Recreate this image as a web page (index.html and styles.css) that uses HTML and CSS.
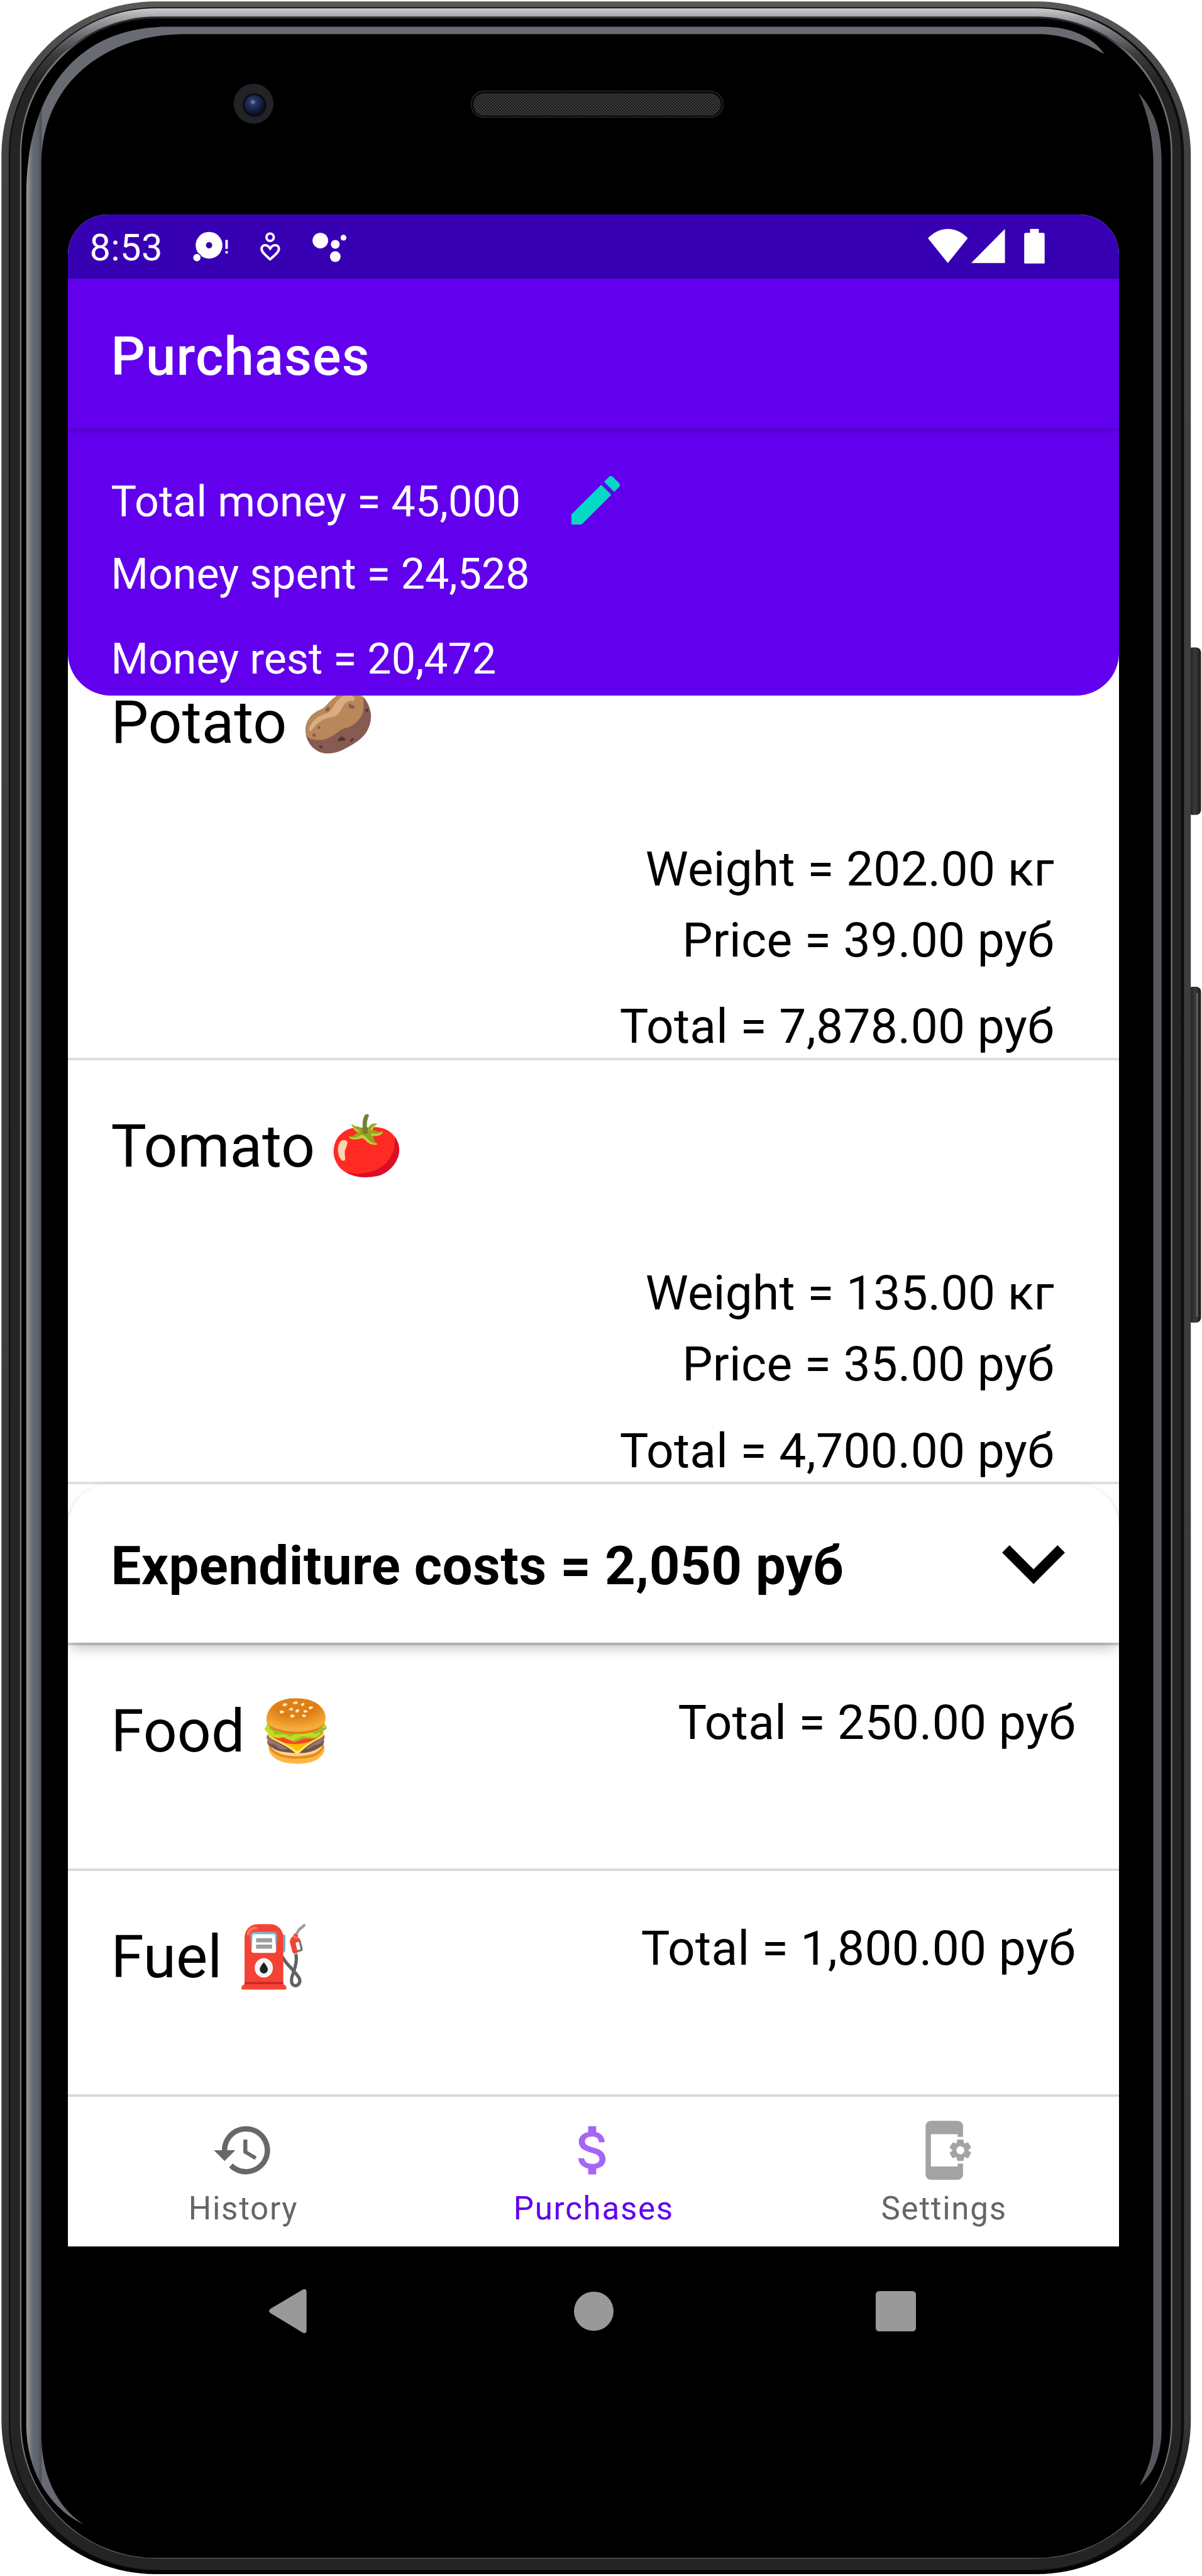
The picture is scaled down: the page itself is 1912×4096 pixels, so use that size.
FILE: index.html
```html
<!DOCTYPE html>
<html lang="en">
<head>
<meta charset="utf-8">
<title>Purchases</title>
<link rel="stylesheet" href="styles.css">
</head>
<body>
<main class="device">
  <svg class="frame" viewBox="0 0 2470 5292" preserveAspectRatio="none" aria-hidden="true">
    <defs>
      <linearGradient id="rim" gradientUnits="userSpaceOnUse" x1="0" y1="0" x2="0" y2="5292">
        <stop offset="0" stop-color="#5b5a59"/><stop offset=".02" stop-color="#4e4c4b"/><stop offset=".06" stop-color="#434040"/><stop offset=".94" stop-color="#3a3736"/><stop offset=".985" stop-color="#0b0b0b"/><stop offset="1" stop-color="#000"/>
      </linearGradient>
      <linearGradient id="bevel" gradientUnits="userSpaceOnUse" x1="0" y1="17" x2="0" y2="217">
        <stop offset="0" stop-color="#cbccce"/><stop offset=".09" stop-color="#a4a6aa"/><stop offset=".24" stop-color="#76797d"/><stop offset=".48" stop-color="#3a3b3d"/><stop offset=".75" stop-color="#242424"/><stop offset="1" stop-color="#242424"/>
      </linearGradient>
      <linearGradient id="edge" gradientUnits="userSpaceOnUse" x1="0" y1="34" x2="0" y2="234">
        <stop offset="0" stop-color="#2a2a2a"/><stop offset=".2" stop-color="#2a2a2a"/><stop offset=".4" stop-color="#777"/><stop offset="1" stop-color="#727373"/>
      </linearGradient>
      <linearGradient id="glassL" gradientUnits="userSpaceOnUse" x1="54" y1="0" x2="86" y2="0">
        <stop offset="0" stop-color="#9a9a9b"/><stop offset=".15" stop-color="#88898c"/><stop offset=".4" stop-color="#676b73"/><stop offset=".75" stop-color="#5d636b"/><stop offset=".98" stop-color="#484d54"/><stop offset="1" stop-color="#696b72"/>
      </linearGradient>
      <linearGradient id="key" x1="0" y1="0" x2="1" y2="0">
        <stop offset="0" stop-color="#111"/><stop offset=".55" stop-color="#3a3a3a"/><stop offset="1" stop-color="#1c1c1c"/>
      </linearGradient>
      <radialGradient id="lens" cx=".42" cy=".35" r=".65">
        <stop offset="0" stop-color="#8d96b4"/><stop offset=".22" stop-color="#2a3764"/><stop offset=".65" stop-color="#131f45"/><stop offset="1" stop-color="#0a0e1c"/>
      </radialGradient>
      <pattern id="mesh" width="6" height="6" patternUnits="userSpaceOnUse">
        <rect width="6" height="6" fill="#141414"/><circle cx="1.5" cy="1.5" r="1.5" fill="#4e5050"/><circle cx="4.5" cy="4.5" r="1.5" fill="#4e5050"/>
      </pattern>
    </defs>
    <rect x="2440" y="1330" width="28" height="344" rx="10" fill="url(#key)"/>
    <rect x="2440" y="2027" width="28" height="690" rx="10" fill="url(#key)"/>
    <path d="M2460 2040V2705" stroke="#6a6a6a" stroke-width="3"/>
    <rect x="3" y="3" width="2444" height="5285" rx="316" fill="url(#rim)"/>
    <rect x="18" y="15" width="2415" height="5266" rx="303" fill="#0d0d0d"/>
    <rect x="21" y="17" width="2406" height="5262" rx="300" fill="url(#bevel)"/>
    <rect x="41" y="34" width="2368" height="5222" rx="280" fill="url(#edge)"/>
    <rect x="44" y="38" width="2362" height="5217" rx="277" fill="#000"/>
    <path fill="url(#glassL)" d="M2141 55H345C150 55 54 200 54 400V4980C54 5080 105 5155 172 5186C115 5150 85 5080 85 5003V340C85 160 230 70 378 70H2141C2185 72 2225 85 2269 111C2245 75 2200 55 2141 55Z"/>
    <path fill="#57585d" d="M2339 190C2375 230 2387 275 2387 335V4990C2387 5045 2368 5085 2342 5106C2360 5070 2370 5045 2370 5000V340C2370 290 2362 240 2339 190Z"/>
    <circle cx="521" cy="213" r="41" fill="#222326"/>
    <circle cx="523" cy="216" r="24" fill="#08090d"/>
    <circle cx="523" cy="216" r="21" fill="url(#lens)"/>
    <rect x="968" y="187" width="518" height="54" rx="27" fill="#0a0a0a" stroke="#262728" stroke-width="2"/>
    <rect x="973" y="192" width="508" height="45" rx="22" fill="url(#mesh)"/>
  </svg>

  <div class="screen">
    <div class="status">
      <span class="clock">8:53</span>
      <svg class="notices" viewBox="396 470 320 72" fill="#fff">
        <path fill-rule="evenodd" d="M429 476a27.5 27.5 0 1 1 0 55a27.5 27.5 0 1 1 0-55zM429 497a6.5 6.5 0 1 0 0 13a6.5 6.5 0 1 0 0-13z"/>
        <circle cx="404" cy="529" r="9.5" fill="#3700b3"/><circle cx="404" cy="529" r="7.5"/>
        <path d="M462.5 492.500h5v18.500h-5zM462.500 515.500h5v5h-5z"/>
        <circle cx="554.500" cy="487" r="7.500" fill="none" stroke="#fff" stroke-width="5"/>
        <path fill="none" stroke="#fff" stroke-width="5" stroke-linejoin="round" d="M554.500 511C550 501 537 501 537 511C537 518 545 524 554.500 532.500C564 524 572.500 518 572.500 511C572.500 501 559 501 554.500 511Z"/>
        <circle cx="657.700" cy="494" r="16"/><circle cx="688.400" cy="501.700" r="9"/><circle cx="705.300" cy="488" r="6"/><circle cx="688.400" cy="527" r="11"/>
      </svg>
      <svg class="signals" viewBox="1906 470 241 72" fill="#fff">
        <path d="M1906 489Q1925 470 1947 470T1988 489L1947 540ZM2064.400 470V540H1995ZM2116 470h18v8h9q3 0 3 3v58q0 3-3 3h-36q-3 0-3-3v-58q0-3 3-3h9z"/>
      </svg>
    </div>

    <header class="appbar"><h1>Purchases</h1></header>

    <section class="summary">
      <div class="summary-total">
        <p>Total money = 45,000</p>
        <svg class="edit" viewBox="3 3 18 18"><path d="M3 17.250V21h3.750L17.810 9.940l-3.750-3.750L3 17.250zM20.710 7.040c.39-.39.39-1.020 0-1.410l-2.340-2.340c-.39-.39-1.020-.39-1.410 0l-1.830 1.830 3.750 3.750 1.830-1.830z"/></svg>
      </div>
      <p class="spent">Money spent = 24,528</p>
      <p class="rest">Money rest = 20,472</p>
    </section>

    <ul class="products">
      <li class="product">
        <h2>Potato 🥔</h2>
        <p class="weight">Weight = 202.00 кг</p>
        <p class="price">Price = 39.00 руб</p>
        <p class="sum">Total = 7,878.00 руб</p>
      </li>
      <li class="product">
        <h2>Tomato 🍅</h2>
        <p class="weight">Weight = 135.00 кг</p>
        <p class="price">Price = 35.00 руб</p>
        <p class="sum">Total = 4,700.00 руб</p>
      </li>
    </ul>

    <section class="expand">
      <h2>Expenditure costs = 2,050 руб</h2>
      <svg class="chevron" viewBox="6 8.590 12 7.410"><path d="M16.590 8.590 12 13.170 7.410 8.590 6 10l6 6 6-6z"/></svg>
    </section>

    <ul class="costs">
      <li class="cost"><h2>Food 🍔</h2><p>Total = 250.00 руб</p></li>
      <li class="cost"><h2>Fuel ⛽</h2><p>Total = 1,800.00 руб</p></li>
    </ul>

    <nav class="tabs">
      <a class="tab">
        <svg viewBox="0 0 24 24" fill="#686868"><path d="M13 3c-4.970 0-9 4.030-9 9H1l3.890 3.890.07.14L9 12H6c0-3.870 3.130-7 7-7s7 3.130 7 7-3.130 7-7 7c-1.930 0-3.680-.79-4.940-2.060l-1.420 1.420C8.270 19.990 10.510 21 13 21c4.970 0 9-4.030 9-9s-4.030-9-9-9zm-1 5v5l4.280 2.540.72-1.210-3.500-2.080V8H12z"/></svg>
        <span>History</span>
      </a>
      <a class="tab active">
        <svg viewBox="0 0 24 24" fill="#a566f6"><path d="M11.800 10.900c-2.270-.59-3-1.200-3-2.150 0-1.090 1.010-1.850 2.700-1.850 1.780 0 2.440.85 2.500 2.100h2.210c-.07-1.720-1.120-3.300-3.210-3.810V3h-3v2.160c-1.940.42-3.500 1.680-3.500 3.610 0 2.310 1.910 3.460 4.700 4.130 2.500.6 3 1.480 3 2.410 0 .69-.49 1.790-2.700 1.790-2.060 0-2.870-.92-2.980-2.100h-2.200c.12 2.190 1.760 3.420 3.680 3.830V21h3v-2.150c1.950-.37 3.500-1.500 3.500-3.550 0-2.840-2.430-3.810-4.700-4.400z"/></svg>
        <span>Purchases</span>
      </a>
      <a class="tab">
        <svg viewBox="0 0 24 24" fill="#a3a3a3"><path d="M21.810 12.740l-.82-.63v-.22l.8-.63c.16-.12.2-.34.1-.51l-.85-1.480c-.07-.13-.21-.2-.35-.2-.05 0-.1.010-.15.030l-.95.38c-.08-.05-.11-.07-.19-.11l-.15-1.010c-.03-.21-.2-.36-.4-.36h-1.710c-.2 0-.37.15-.4.34l-.14 1.010c-.03.020-.07.030-.1.050l-.09.060-.95-.38c-.05-.02-.1-.03-.15-.03-.14 0-.27.070-.35.2l-.85 1.480c-.1.170-.06.390.1.510l.8.630v.23l-.8.630c-.16.120-.2.340-.1.510l.85 1.480c.07.130.21.200.35.200.05 0 .1-.01.15-.03l.95-.37c.08.050.12.070.2.110l.15 1.010c.03.200.2.340.4.340h1.710c.2 0 .37-.15.4-.34l.15-1.010c.03-.02.07-.03.1-.05l.09-.06.95.38c.05.020.1.030.15.030.14 0 .27-.07.35-.2l.85-1.480c.1-.17.06-.39-.1-.51zM18 13.500c-.83 0-1.500-.67-1.500-1.500s.67-1.500 1.500-1.500 1.500.67 1.500 1.500-.67 1.500-1.500 1.500zM17 18H7V6h10v1h2V3c0-1.100-.9-2-2-2H7c-1.100 0-2 .9-2 2v18c0 1.100.9 2 2 2h10c1.100 0 2-.9 2-2v-4h-2v1z"/></svg>
        <span>Settings</span>
      </a>
    </nav>

    <div class="system">
      <svg class="back" viewBox="553 4704 77 90"><path fill="#999" d="M622 4705Q630 4701 630 4710V4788Q630 4797 622 4793L556 4753Q550 4749 556 4744Z"/></svg>
      <span class="home"></span>
      <span class="recent"></span>
    </div>
  </div>
</main>
</body>
</html>
```

FILE: styles.css
```css
/* 1rem is one density-independent pixel of the phone screen */
html { font-size: 4.2573px; }
* { box-sizing: border-box; margin: 0; padding: 0; }
body { background: #fff; font-family: Roboto, "Noto Color Emoji", sans-serif; color: #000; }
ul { list-style: none; }
svg { display: block; flex: none; }
h1, h2, p, span { line-height: 1.171875; white-space: nowrap; }

.device { position: relative; width: 1912px; height: 4096px; padding: 80rem 0 0 25.4545rem; overflow: hidden; }
.frame { position: absolute; inset: 0; width: 1912px; height: 4096px; }
.screen { position: relative; width: 392.727rem; border-radius: 15rem 15rem 0 0; overflow: hidden; background: #fff; }

.status { display: flex; height: 24rem; padding-left: 8rem; background: #3700b3; }
.clock { width: 38.545rem; padding-top: 4.45rem; font-size: 14rem; letter-spacing: .006em; color: #fff; }
.notices { width: 58.18rem; height: 13.09rem; margin-top: 5.45rem; }
.signals { width: 43.8rem; height: 13.09rem; margin: 5.45rem 27.8rem 0 auto; }

.appbar { position: relative; z-index: 3; height: 56rem; padding: 17.75rem 16rem 0; background: #6200ee; color: #fff; box-shadow: 0 3px 10px rgba(0, 0, 0, .22); }
.appbar h1 { font-size: 20rem; font-weight: 500; letter-spacing: .0135em; }

.summary { position: relative; z-index: 2; height: 99.8rem; padding: 15rem 16rem 0; border-radius: 0 0 16rem 16rem; background: #6200ee; color: #fff; font-size: 16rem; }
.summary-total { display: flex; height: 22rem; }
.summary-total p { width: 172rem; padding-top: 3.26rem; letter-spacing: .002em; }
.edit { width: 18.1rem; height: 18.1rem; margin-top: 2.8rem; fill: #03dac5; }
.spent { margin-top: 8.35rem; }
.rest { margin-top: 12.9rem; }

.products { margin-top: -22.35rem; }
.product { height: 158.5rem; padding: 19.2rem 24.3rem 0 16rem; border-bottom: 1rem solid #dfdfdf; font-size: 18rem; letter-spacing: .004em; text-align: right; }
.product h2, .cost h2 { height: 25.78rem; font-size: 22.25rem; font-weight: 400; letter-spacing: 0; text-align: left; }
.weight { margin-top: 31.77rem; }
.price { margin-top: 5.46rem; }
.sum { margin-top: 11.27rem; }

.expand { position: relative; z-index: 1; display: flex; justify-content: space-between; height: 59rem; padding: 19rem 20.2rem 0 16rem; border-radius: 16rem 16rem 0 0; background: #fff; box-shadow: 0 12px 22px -4px rgba(0, 0, 0, .24), 0 2px 7px rgba(0, 0, 0, .1); }
.expand h2 { font-size: 20rem; font-weight: 700; letter-spacing: .005em; }
.chevron { width: 23.5rem; height: 14.5rem; margin-top: 3.7rem; }

.costs { border-top: 1rem solid #dfdfdf; }
.cost { display: flex; justify-content: space-between; height: 84.36rem; padding: 18.6rem 16.3rem 0 16rem; border-bottom: 1rem solid #dadada; font-size: 18rem; letter-spacing: .004em; }
.cost h2 { margin-top: .5rem; }

.tabs { display: grid; grid-template-columns: repeat(3, 1fr); height: 56rem; background: #fff; }
.tab { display: flex; flex-direction: column; align-items: center; padding-top: 8rem; gap: 2.8rem; color: #666; font-size: 12rem; letter-spacing: .0333em; }
.tab svg { width: 24rem; height: 24rem; }
.tab.active { color: #6200ee; }

.system { display: flex; align-items: center; height: 48.2rem; padding-left: 75.1rem; background: #000; }
.back { width: 14rem; height: 16.4rem; }
.home { width: 14.7rem; height: 14.7rem; margin-left: 100rem; border-radius: 50%; background: #999; }
.recent { width: 15.1rem; height: 15.1rem; margin-left: 98rem; border-radius: 1.3rem; background: #999; }
```
